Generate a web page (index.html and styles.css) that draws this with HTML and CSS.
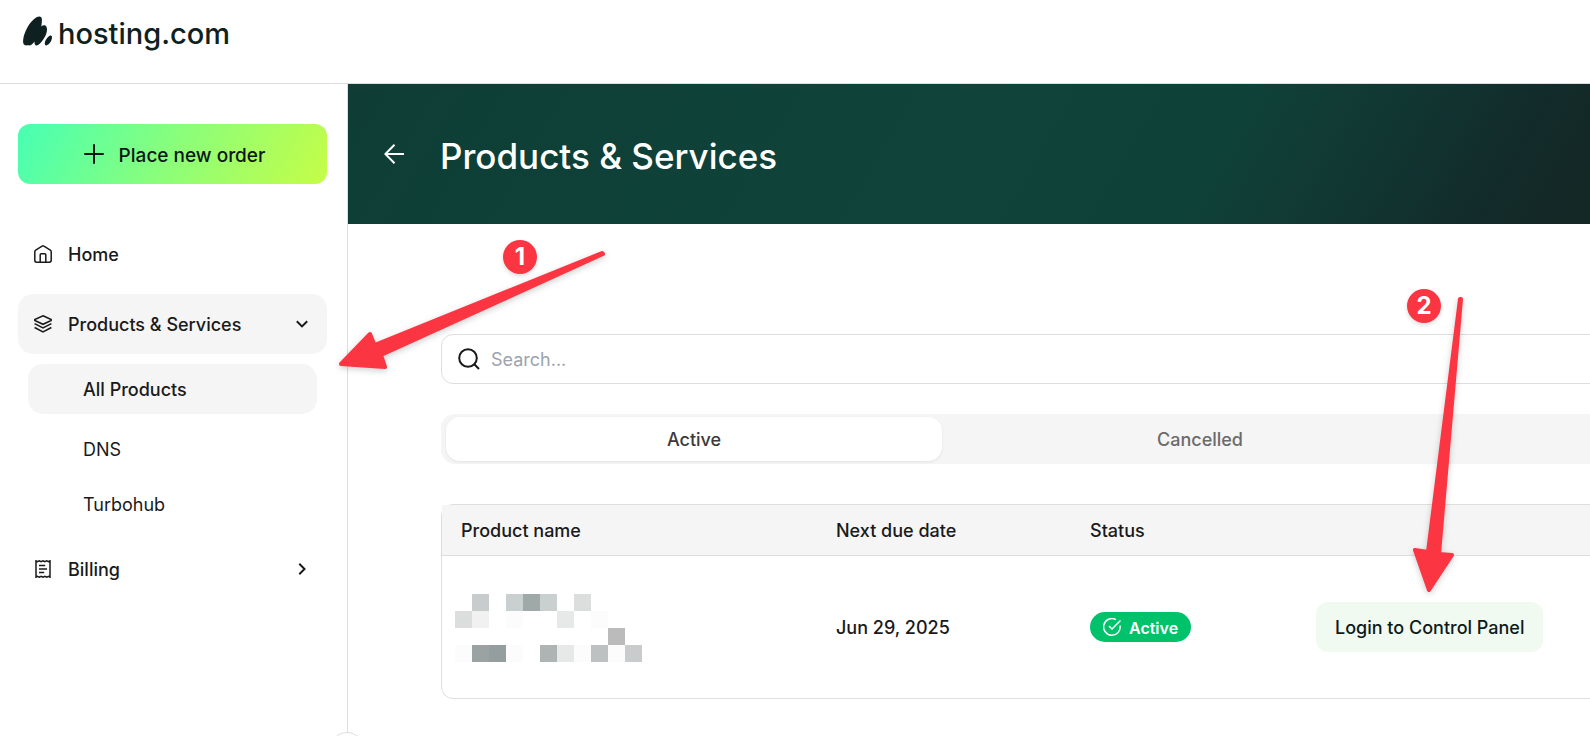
FILE: index.html
```html
<!DOCTYPE html>
<html lang="en">
<head>
  <meta charset="utf-8">
  <meta name="viewport" content="width=device-width, initial-scale=1">
  <title>Products &amp; Services</title>
  <link rel="stylesheet" href="styles.css">
</head>
<body>
  <header class="topbar">
    <a class="logo" href="#">
      <svg class="logo-mark" viewBox="0 0 29 30" aria-hidden="true">
        <path d="M3 29.500C0.500 29.500-.3 27 .2 23.500 1.200 15.500 7 5 13.500 1.300c2.800-1.600 5.300-1 5.400 1.900.1 2.300-.3 4.800-.6 7.300 1.700-1.600 3.900-1.800 5 .1 1.600 2.900.3 7.600-2.300 11.700-1.900 3-4.600 6.700-7 7.200-2 .3-2.600-1.400-2.500-4-1.700 2.100-3 3.700-5 3.900-1 .1-1.300-.5-3.500.1z"/>
        <path d="M28.700 20c.7 1.300.1 4-1.400 6.300-1.500 2.300-3.600 3.600-4.800 2.900-1.200-.8-.8-3.300.6-5.700 1.500-2.500 4.600-5.300 5.600-3.500z"/>
      </svg>
      <span>hosting.com</span>
    </a>
  </header>

  <div class="shell">
    <aside class="sidebar">
      <button class="order" type="button">
        <svg class="plus" viewBox="0 0 20 20" aria-hidden="true"><path d="M10 1v18M1 10h18"/></svg>
        <span>Place new order</span>
      </button>

      <nav class="nav" aria-label="Main">
        <a class="item" href="#">
          <svg class="icon" viewBox="0 0 18 18" aria-hidden="true"><path d="M.8 6.700c0-.7.300-1.200.9-1.600L8.100 1.100c.6-.4 1.200-.4 1.800 0l6.400 4c.6.400.9.900.9 1.600v8.600c0 1.100-.8 1.900-1.900 1.900H2.700c-1.100 0-1.900-.8-1.900-1.900zM6.200 17V9.800c0-.6.4-1 1-1h3.600c.6 0 1 .4 1 1V17"/></svg>
          <span class="label">Home</span>
        </a>
        <a class="item current" href="#">
          <svg class="icon" viewBox="0 0 18 18" aria-hidden="true"><path d="M9 .8l8.200 3.800v.9L9 9.300.8 5.500v-.9zM.6 8.600L9 13l8.400-4.400M.6 12.500L9 17l8.400-4.500"/></svg>
          <span class="label">Products &amp; Services</span>
          <svg class="chevron" viewBox="0 0 12 12" aria-hidden="true"><path d="M.8 3.200L6 8.400l5.200-5.200"/></svg>
        </a>
        <div class="subnav">
          <a class="sub selected" href="#">All Products</a>
          <a class="sub" href="#">DNS</a>
          <a class="sub" href="#">Turbohub</a>
        </div>
        <a class="item" href="#">
          <svg class="icon" viewBox="0 0 18 18" aria-hidden="true"><path d="M2 .8l1.400.9L5.300.8l1.800.9L9 .8l1.900.9 1.800-.9 1.900.9L16 .8v16.400l-1.400-.9-1.900.9-1.800-.9-1.900.9-1.900-.9-1.800.9-1.900-.9-1.400.9zM5 5.600h6.200M5 9h8M5 12.400h5.200"/></svg>
          <span class="label">Billing</span>
          <svg class="chevron" viewBox="0 0 12 12" aria-hidden="true"><path d="M3.300.8L8.500 6l-5.200 5.200"/></svg>
        </a>
      </nav>
      <button class="collapse" type="button" aria-label="Collapse menu"></button>
    </aside>

    <main class="main">
      <div class="banner">
        <a class="back" href="#" aria-label="Back">
          <svg viewBox="0 0 20 20" aria-hidden="true"><path d="M10.500.8L1.300 10l9.200 9.200M1.300 10H20"/></svg>
        </a>
        <h1>Products &amp; Services</h1>
      </div>

      <div class="content">
        <label class="search">
          <svg viewBox="0 0 22 22" aria-hidden="true"><circle cx="10" cy="10" r="8.800"/><path d="M16.300 16.300l4.700 4.700"/></svg>
          <input type="search" placeholder="Search..." aria-label="Search">
        </label>

        <div class="tabs" role="tablist">
          <button class="tab on" type="button" role="tab" aria-selected="true">Active</button>
          <button class="tab" type="button" role="tab" aria-selected="false">Cancelled</button>
        </div>

        <table class="products">
          <colgroup>
            <col class="c-name"><col class="c-date"><col class="c-status"><col>
          </colgroup>
          <thead>
            <tr><th>Product name</th><th>Next due date</th><th>Status</th><td></td></tr>
          </thead>
          <tbody>
            <tr>
              <td class="masked">
                <svg class="mosaic" viewBox="0 0 11 4" shape-rendering="crispEdges" aria-hidden="true">
                  <path fill="#c8cccc" d="M1 0h1v1H1zM10 3h1v1h-1z"/>
                  <path fill="#cacfcf" d="M3 0h1v1H3zM5 0h1v1H5z"/>
                  <path fill="#9fa9a7" d="M4 0h1v1H4z"/>
                  <path fill="#dcdedd" d="M7 0h1v1H7zM0 1h1v1H0z"/>
                  <path fill="#f1f1f1" d="M1 1h1v1H1z"/>
                  <path fill="#e7e8e8" d="M6 1h1v1H6zM6 3h1v1H6z"/>
                  <path fill="#bbb" d="M9 2h1v1H9z"/>
                  <path fill="#9aa3a1" d="M1 3h1v1H1z"/>
                  <path fill="#959e9f" d="M2 3h1v1H2z"/>
                  <path fill="#aeb4b4" d="M5 3h1v1H5z"/>
                  <path fill="#bdc1c1" d="M8 3h1v1H8z"/>
                  <path fill="#fcfcfc" d="M3 1h1v1H3zM8 1h1v1H8zM0 3h1v1H0zM3 3h1v1H3zM7 3h1v1H7zM9 3h1v1H9z"/>
                </svg>
              </td>
              <td>Jun 29, 2025</td>
              <td class="state">
                <span class="pill">
                  <svg viewBox="0 0 18 18" aria-hidden="true"><path d="M17.100 7.600A8.300 8.300 0 1 1 12.800 1.600M6 8l3 3 8.500-8.500"/></svg>
                  <span>Active</span>
                </span>
              </td>
              <td class="state"><button class="login" type="button">Login to Control Panel</button></td>
            </tr>
          </tbody>
        </table>
      </div>
    </main>
  </div>

  <svg class="arrow arrow-one" viewBox="0 0 272 124" aria-hidden="true">
    <path d="M6 117L35 87l4.500 11L267 6l1 1L46 108l4 12z"/>
  </svg>
  <span class="step step-one">1</span>
  <svg class="arrow arrow-two" viewBox="0 0 60 304" aria-hidden="true">
    <path d="M53 7h1L32 262l13 1L22 298 8 258l13 2z"/>
  </svg>
  <span class="step step-two">2</span>
</body>
</html>
```

FILE: styles.css
```css
*,
*::before,
*::after {
  box-sizing: border-box;
}

body {
  margin: 0;
  min-height: 100vh;
  display: flex;
  flex-direction: column;
  position: relative;
  overflow: hidden;
  background: #fff;
  color: #1a1a1a;
  font: 500 18px/24px Inter, "Liberation Sans", sans-serif;
}

a {
  color: inherit;
  text-decoration: none;
}

button,
input {
  font: inherit;
  color: inherit;
  border: 0;
}

svg {
  display: block;
  flex: none;
  fill: none;
  stroke: currentColor;
  stroke-width: 1.5;
}

.topbar {
  height: 84px;
  padding: 12px 23px;
  border-bottom: 1px solid #dedede;
}

.logo {
  display: inline-flex;
  align-items: center;
  gap: 6px;
  color: #0e2120;
  font-size: 29px;
  line-height: 44px;
}

.logo-mark {
  width: 29px;
  height: 30px;
  margin-bottom: 6px;
  fill: currentColor;
  stroke: none;
}

.shell {
  flex: 1;
  display: flex;
}

.sidebar {
  position: relative;
  flex: none;
  width: 348px;
  padding: 40px 20px 40px 18px;
  border-right: 1px solid #dedede;
}

.order {
  display: flex;
  align-items: center;
  justify-content: center;
  gap: 15px;
  width: 100%;
  height: 60px;
  padding: 0 6px 0 10px;
  border-radius: 12px;
  background: linear-gradient(120deg, #46ffb4, #8bfe7a 50%, #c5fd46);
  color: #0e1717;
  font-size: 19px;
}

.order span {
  padding-top: 3px;
}

.plus {
  width: 20px;
  height: 20px;
  stroke-width: 2;
  stroke-linecap: round;
}

.nav {
  display: flex;
  flex-direction: column;
  gap: 10px;
  margin-top: 40px;
}

.item {
  display: flex;
  align-items: center;
  gap: 16px;
  height: 60px;
  padding: 0 19px 0 16px;
  border-radius: 15px;
}

.current,
.selected {
  background: #f5f5f5;
}

.icon {
  width: 18px;
  height: 18px;
}

.label {
  flex: 1;
  padding-top: 2px;
}

.chevron {
  width: 12px;
  height: 12px;
  stroke-width: 2;
}

.subnav {
  display: flex;
  flex-direction: column;
  gap: 5px;
  padding: 0 10px;
}

.sub {
  padding: 14px 55px 12px;
  border-radius: 15px;
  font-weight: 400;
}

.selected {
  margin-bottom: 5px;
  font-weight: 500;
}

.collapse {
  position: absolute;
  right: -17px;
  bottom: -30px;
  width: 34px;
  height: 34px;
  border: 1px solid #dedede;
  border-radius: 50%;
  background: #fff;
}

.main {
  flex: 1;
  min-width: 0;
  overflow: hidden;
}

.banner {
  display: flex;
  align-items: center;
  gap: 36px;
  height: 140px;
  padding: 0 36px;
  background: linear-gradient(120deg, #0f3d36, #0e4037 15%, #10433a 50%, #0e4239 68%, #113b34 76%, #113330 84%, #122c2b 90%, #142826 98%);
  color: #fff;
}

.back svg {
  width: 20px;
  height: 20px;
  stroke-width: 2;
}

h1 {
  margin: 0;
  padding-top: 4px;
  font-size: 35px;
  font-weight: 500;
  line-height: 48px;
}

.content {
  min-width: 1611px;
  padding: 110px 0 37px 93px;
}

.search {
  display: flex;
  align-items: center;
  gap: 11px;
  height: 50px;
  padding: 0 16px;
  border: 1px solid #dedede;
  border-radius: 12px;
}

.search svg {
  width: 22px;
  height: 22px;
  stroke-width: 2;
}

.search input {
  flex: 1;
  padding: 2px 0 0;
  outline: 0;
  background: transparent;
  font-weight: 400;
}

.search input::placeholder {
  color: #9ca3af;
}

.tabs {
  display: grid;
  grid-template-columns: repeat(3, 1fr);
  gap: 10px;
  margin: 30px 0 40px;
  padding: 3px 5px;
  border-radius: 14px;
  background: #f5f5f5;
}

.tab {
  height: 44px;
  padding-top: 3px;
  border-radius: 14px;
  background: transparent;
  color: #6b6b6b;
}

.on {
  background: #fff;
  box-shadow: 0 1px 3px rgba(0, 0, 0, 0.08);
  color: #3a3a3a;
}

.products {
  width: 100%;
  table-layout: fixed;
  border-collapse: separate;
  border-spacing: 0;
  border: 1px solid #dedede;
  border-radius: 12px;
}

.c-name {
  width: 375px;
}

.c-date {
  width: 254px;
}

.c-status {
  width: 226px;
}

.products th,
.products td {
  padding: 2px 19px 0;
  text-align: left;
  font-weight: 500;
}

.products thead th,
.products thead td {
  height: 51px;
  border-bottom: 1px solid #dedede;
  background: #f5f5f5;
}

.products tbody td {
  height: 142px;
}

.products .masked {
  padding-left: 13px;
}

.products .state {
  padding-top: 0;
}

.mosaic {
  width: 187px;
  height: 68px;
  stroke: none;
}

.pill {
  display: inline-flex;
  align-items: center;
  gap: 8px;
  height: 30px;
  padding: 0 13px;
  border-radius: 15px;
  background: #00c26a;
  color: #fff;
  font-size: 16px;
  font-weight: 600;
  vertical-align: middle;
}

.pill span {
  padding-top: 2px;
}

.pill svg {
  width: 18px;
  height: 18px;
}

.login {
  height: 50px;
  padding: 2px 19px 0;
  border-radius: 12px;
  background: #f0faf0;
  color: #0e1b1b;
}

.arrow {
  position: absolute;
  fill: #fb3542;
  stroke: #fb3542;
  stroke-width: 4;
  stroke-linejoin: round;
  filter: drop-shadow(0 2px 3px rgba(0, 0, 0, 0.2));
}

.arrow-one {
  left: 335px;
  top: 247px;
  width: 272px;
  height: 124px;
}

.arrow-two {
  left: 1407px;
  top: 292px;
  width: 60px;
  height: 304px;
}

.step {
  position: absolute;
  width: 34px;
  border-radius: 50%;
  background: #fb3542;
  box-shadow: 0 2px 4px rgba(0, 0, 0, 0.15);
  color: #fff;
  font-size: 24px;
  font-weight: 700;
  line-height: 34px;
  text-align: center;
}

.step-one {
  left: 503px;
  top: 240px;
}

.step-two {
  left: 1407px;
  top: 289px;
}
```
